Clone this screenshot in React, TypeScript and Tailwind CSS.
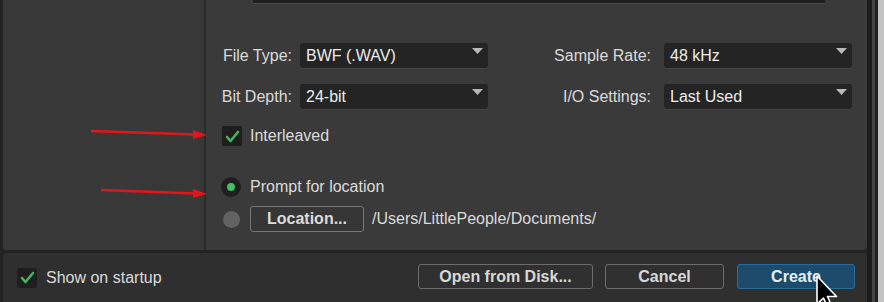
import React from "react";

const Caret = () => (
  <svg width="11" height="6" viewBox="0 0 11 6" className="absolute right-[5px] top-[5px]">
    <polygon points="0,0 11,0 5.5,6" fill="#b8b8b8" />
  </svg>
);

const Dropdown = ({ value }: { value: string }) => (
  <div className="relative ml-[8px] w-[188px] h-[25px] rounded-[3px] bg-[#242424] shadow-[0_1px_0_#444] flex items-center pl-[6px] text-[16px] text-[#ececec]">
    {value}
    <Caret />
  </div>
);

const Check = () => (
  <div className="w-[20px] h-[20px] bg-[#1e1e1e] rounded-[2px] flex items-center justify-center">
    <svg width="15" height="13" viewBox="0 0 15 13">
      <path d="M2 7 L5.5 11 L13 2" fill="none" stroke="#44b25e" strokeWidth="2.6" strokeLinecap="round" strokeLinejoin="round" />
    </svg>
  </div>
);

export default function App() {
  return (
    <div className="w-[884px] h-[302px] bg-[#232323] flex relative overflow-hidden font-['Liberation_Sans',Arial,sans-serif] text-[16px] text-[#dadada]">
      <div className="w-[867px] flex flex-col">
        {/* upper panel */}
        <div className="ml-[3px] h-[250px] flex rounded-b-[4px] bg-[#3a3a3a] overflow-hidden">
          <div className="w-[201px] bg-[#383838]" />
          <div className="w-[2px] bg-[#2a2a2a]" />
          <div className="flex-1 flex flex-col">
            <div className="ml-[47px] w-[572px] h-[3px] bg-[#1e1e1e] shadow-[0_1px_0_#4a4a4a]" />
            {/* row 1 */}
            <div className="mt-[40px] flex items-center h-[25px]">
              <div className="w-[86px] text-right">File Type:</div>
              <Dropdown value="BWF (.WAV)" />
              <div className="w-[163px] text-right">Sample Rate:</div>
              <div className="ml-[5px]" />
              <Dropdown value="48 kHz" />
            </div>
            {/* row 2 */}
            <div className="mt-[16px] flex items-center h-[25px]">
              <div className="w-[86px] text-right">Bit Depth:</div>
              <Dropdown value="24-bit" />
              <div className="w-[163px] text-right">I/O Settings:</div>
              <div className="ml-[5px]" />
              <Dropdown value="Last Used" />
            </div>
            {/* interleaved */}
            <div className="mt-[17px] ml-[16px] flex items-center h-[20px]">
              <Check />
              <span className="ml-[8px]">Interleaved</span>
            </div>
            {/* prompt radio */}
            <div className="mt-[31px] ml-[15px] flex items-center h-[20px]">
              <div className="w-[20px] h-[20px] rounded-full bg-[#1f1f1f] flex items-center justify-center">
                <div className="w-[8px] h-[8px] rounded-full bg-[#3fbf66]" />
              </div>
              <span className="ml-[9px]">Prompt for location</span>
            </div>
            {/* location */}
            <div className="mt-[9px] ml-[17px] flex items-center h-[26px]">
              <div className="w-[17px] h-[17px] rounded-full bg-[#626262]" />
              <button className="ml-[10px] w-[114px] h-[26px] rounded-[3px] border border-[#777] bg-[#363636] font-bold text-[#dcdcdc]">
                Location...
              </button>
              <span className="ml-[8px]">/Users/LittlePeople/Documents/</span>
            </div>
          </div>
        </div>
        {/* bottom bar */}
        <div className="mt-[3px] ml-[3px] flex-1 rounded-t-[4px] bg-[#2f2f2f] flex items-center">
          <div className="ml-[14px]">
            <Check />
          </div>
          <span className="ml-[9px]">Show on startup</span>
          <div className="ml-auto mr-[12px] flex items-center gap-[12px] -mt-[2px]">
            <button className="w-[175px] h-[25px] rounded-[3px] border border-[#6c6c6c] bg-[#303030] font-bold text-[#d8d8d8]">
              Open from Disk...
            </button>
            <button className="w-[119px] h-[25px] rounded-[3px] border border-[#6c6c6c] bg-[#303030] font-bold text-[#d8d8d8]">
              Cancel
            </button>
            <button className="ml-[1px] w-[118px] h-[25px] rounded-[3px] border border-[#2e6c96] bg-[#1c4b6c] font-bold text-[#e6eef4]">
              Create
            </button>
          </div>
        </div>
      </div>
      {/* right edge */}
      <div className="flex">
        <div className="w-[5px] bg-[#1c1c1c]" />
        <div className="w-[3px] bg-[#454545]" />
        <div className="w-[3px] bg-[#202020]" />
        <div className="w-[6px] bg-[#c4c4c4]" />
      </div>
      {/* red arrows overlay */}
      <svg className="absolute left-0 top-0 pointer-events-none" width="884" height="302">
        <line x1="91" y1="131" x2="196" y2="134.5" stroke="#e5141a" strokeWidth="2.5" />
        <polygon points="193,130 207,135 193,139" fill="#e5141a" />
        <line x1="101" y1="190" x2="196" y2="193.5" stroke="#e5141a" strokeWidth="2.5" />
        <polygon points="193,189 207,194 193,198" fill="#e5141a" />
      </svg>
      {/* cursor */}
      <svg className="absolute left-[815px] top-[274px] pointer-events-none" width="30" height="40" viewBox="0 0 30 40">
        <path d="M2 2 L2 30 L8.5 24 L13 34 L17 32.5 L12.5 22.5 L21.5 22.5 Z" fill="#000" stroke="#fff" strokeWidth="1.6" strokeLinejoin="round" />
      </svg>
    </div>
  );
}
